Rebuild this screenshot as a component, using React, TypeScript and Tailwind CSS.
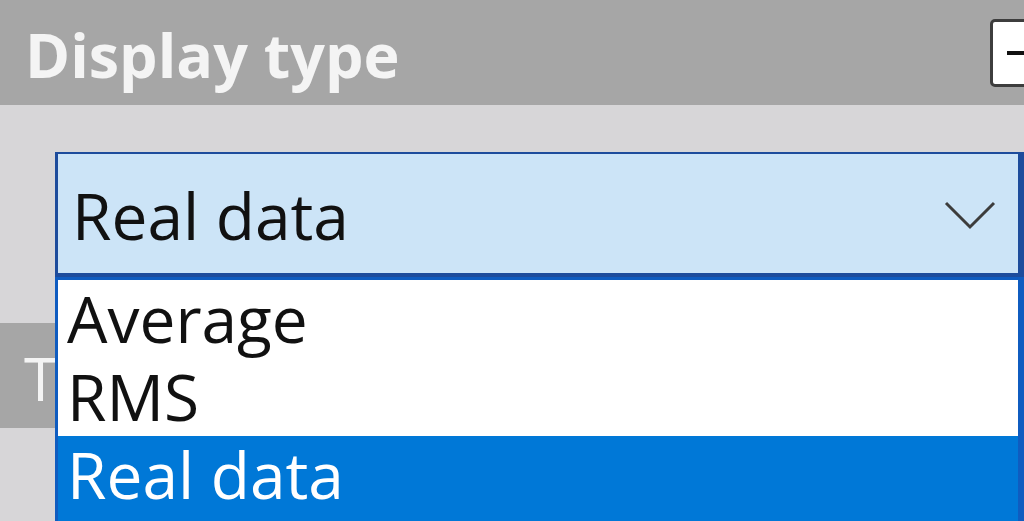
import { useState } from "react";

const options = ["Average", "RMS", "Real data"];

export default function App() {
  const [selected, setSelected] = useState("Real data");
  const [open, setOpen] = useState(true);

  return (
    <div className="h-[521px] w-[1024px] overflow-hidden bg-[#d7d6d8] font-['Open_Sans','Noto_Sans',sans-serif]">
      {/* section header */}
      <div className="flex h-[105px] items-center justify-between bg-[#a6a6a6] pl-[25px]">
        <span className="mt-[3px] text-[61px] font-bold leading-none text-[#f4f4f4]">
          Display type
        </span>
        <button
          type="button"
          className="-mr-[22px] flex h-[68px] w-[56px] items-center justify-center rounded-[5px] border-[3px] border-[#3d3d3d] bg-white"
        >
          <span className="h-[4px] w-[22px] bg-[#111]" />
        </button>
      </div>

      <div className="relative pl-[55px] pt-[47px]">
        <button
          type="button"
          onClick={() => setOpen(!open)}
          className="flex h-[125px] w-[969px] items-center justify-between border-b-[4px] border-l-[3px] border-r-[6px] border-t-[2px] border-[#1d4c9c] bg-[#cce4f7] pl-[14px] pr-[22px] text-left"
        >
          <span className="mt-[4px] text-[64px] leading-none text-[#111]">
            {selected}
          </span>
          <svg width="52" height="32" viewBox="0 0 52 32" className="mt-[2px]">
            <polyline
              points="2,4 26,28 50,4"
              fill="none"
              stroke="#3c3c3c"
              strokeWidth="3"
            />
          </svg>
        </button>

        {open && (
          <div className="absolute left-[55px] top-[172px] z-10 w-[969px] border-l-[3px] border-r-[6px] border-t-[3px] border-[#0f5cc0] bg-white">
            {options.map((opt) => (
              <div
                key={opt}
                onClick={() => {
                  setSelected(opt);
                  setOpen(false);
                }}
                className={
                  opt === selected
                    ? "h-[78px] bg-[#0078d7] pl-[9px] pt-[7px] text-[64px] leading-none text-white"
                    : "h-[78px] pl-[9px] pt-[7px] text-[64px] leading-none text-[#111]"
                }
              >
                {opt}
              </div>
            ))}
            <div className="h-[40px] bg-[#0078d7]" />
          </div>
        )}
      </div>

      {/* next section header, mostly covered by the list */}
      <div className="mt-[46px] flex h-[105px] items-center bg-[#a6a6a6] pl-[24px]">
        <span className="mt-[5px] text-[60px] leading-none text-[#f4f4f4]">
          Trigger
        </span>
      </div>
    </div>
  );
}
